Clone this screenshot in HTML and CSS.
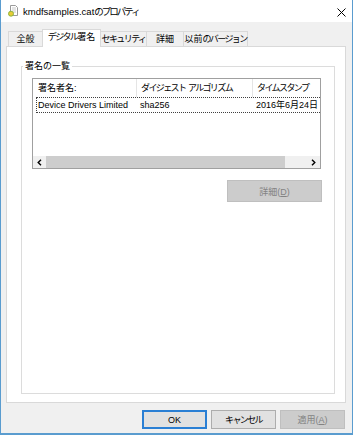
FILE: index.html
```html
<!DOCTYPE html>
<html lang="ja">
<head>
    <meta charset="UTF-8">
    <meta name="viewport" content="width=device-width, initial-scale=1.0">
    <title>kmdfsamples.catのプロパティ</title>
    <link rel="stylesheet" href="styles.css">
</head>
<body>
    <div class="window">
        <div class="title-bar">
            <svg class="file-icon" viewBox="0 0 10 12">
                <path d="M2.5 0.5h5l2 2v8h-7z" fill="#fff" stroke="#9a9a9a"/>
                <path d="M4 3h4M4 5h4M5 7h3" stroke="#c9c9c9"/>
                <circle cx="3" cy="8.7" r="2.5" fill="#e9cb36" stroke="#8db43c"/>
            </svg>
            <span class="title">kmdfsamples.cat<span class="kana title-kana">のプロパティ</span></span>
            <svg class="close-icon" viewBox="0 0 9 9">
                <path d="M0.5 0.5l8 8M8.5 0.5l-8 8" stroke="#000" stroke-width="1"/>
            </svg>
        </div>
        <div class="client">
            <div class="tabs">
                <div class="tab tab-general">全般</div>
                <div class="tab tab-active tab-sign"><span class="kana">デジタル</span>署名</div>
                <div class="tab tab-security"><span class="kana">セキュリティ</span></div>
                <div class="tab tab-detail">詳細</div>
                <div class="tab tab-version">以前<span class="kana">のバージョン</span></div>
            </div>
            <div class="tab-page">
                <fieldset class="sig-group">
                    <legend>署名の一覧</legend>
                    <div class="group-body">
                        <div class="sig-list">
                            <div class="list-head">
                                <div class="head-cell head-name">署名者名:</div>
                                <div class="head-cell head-digest"><span class="kana">ダイジェスト</span> <span class="kana">アルゴリズム</span></div>
                                <div class="head-cell head-stamp"><span class="kana">タイムスタンプ</span></div>
                            </div>
                            <div class="list-row">
                                <div class="row-cell row-name">Device Drivers Limited</div>
                                <div class="row-cell row-digest">sha256</div>
                                <div class="row-cell row-stamp">2016年6月24日 4:22:58</div>
                            </div>
                            <div class="list-space"></div>
                            <div class="hscroll">
                                <div class="scroll-btn">
                                    <svg viewBox="0 0 5 7"><path d="M4 0.8L1.2 3.5L4 6.2" fill="none" stroke="#000" stroke-width="1.4"/></svg>
                                </div>
                                <div class="scroll-thumb"></div>
                                <div class="scroll-track"></div>
                                <div class="scroll-btn">
                                    <svg viewBox="0 0 5 7"><path d="M1 0.8L3.8 3.5L1 6.2" fill="none" stroke="#000" stroke-width="1.4"/></svg>
                                </div>
                            </div>
                        </div>
                        <button class="btn btn-disabled btn-details" disabled>詳細(<u>D</u>)</button>
                    </div>
                </fieldset>
            </div>
            <div class="dialog-buttons">
                <button class="btn btn-dialog btn-default">OK</button>
                <button class="btn btn-dialog"><span class="kana">キャンセル</span></button>
                <button class="btn btn-dialog btn-disabled" disabled>適用(<u>A</u>)</button>
            </div>
        </div>
    </div>
</body>
</html>
```

FILE: styles.css
```css
:root {
    --face-color: #f0f0f0;
    --frame-color: #d9d9d9;
    --window-border: #5a9ccf;
    --disabled-bg: #cccccc;
    --disabled-border: #bfbfbf;
    --disabled-text: #838383;
}
*{
    box-sizing: border-box;
}
body{
    margin: 0;
    font-family: "Liberation Sans", "Noto Sans CJK JP", sans-serif;
    font-size: 9px;
    color: #000;
}
/* カナは幅を詰める */
.kana{
    letter-spacing: -1.6px;
}
.window{
    display: flex;
    flex-direction: column;
    width: 353px;
    height: 435px;
    border: 1px solid var(--window-border);
    border-top: none;
    border-bottom-width: 2px;
    background: var(--face-color);
}
/* タイトルバー */
.title-bar{
    display: flex;
    align-items: center;
    height: 22px;
    padding: 0 6px 0 7px;
    background: #fff;
}
.file-icon{
    width: 10px;
    height: 12px;
    margin-right: 5px;
}
.title{
    flex: 1;
    font-size: 9.5px;
}
.title-kana{
    letter-spacing: -2px;
}
.close-icon{
    width: 9px;
    height: 9px;
    margin-top: 2px;
}
.client{
    flex: 1;
    display: flex;
    flex-direction: column;
    padding: 7px 6px 4px 5px;
}
/* タブ */
.tabs{
    display: flex;
    align-items: flex-end;
    height: 17px;
    padding-left: 2px;
}
.tab{
    height: 15px;
    margin-right: -1px;
    border: 1px solid var(--frame-color);
    border-bottom: none;
    line-height: 14px;
    text-align: center;
    white-space: nowrap;
}
.tab-active{
    position: relative;
    z-index: 1;
    height: 18px;
    margin-bottom: -1px;
    background: #fff;
}
.tab-general{ width: 35px; }
.tab-sign{ width: 59px; }
.tab-security{ width: 47px; }
.tab-detail{ width: 38px; }
.tab-version{ width: 65px; }
.tab-page{
    display: flex;
    flex-direction: column;
    height: 357px;
    padding: 13px 10px 8px 14px;
    border: 1px solid var(--frame-color);
    background: #fff;
}
/* 署名の一覧 */
.sig-group{
    flex: 1;
    min-width: 0;
    margin: 0;
    padding: 0;
    border: 1px solid #dcdcdc;
}
.sig-group legend{
    margin-left: 1px;
    padding: 0 2px;
    line-height: 12px;
}
.group-body{
    display: flex;
    flex-direction: column;
    padding: 6px 13px 0 10px;
}
.sig-list{
    display: flex;
    flex-direction: column;
    height: 91px;
    overflow: hidden;
    border: 1px solid #a0a0a0;
    background: #fff;
}
.list-head{
    display: flex;
    flex-shrink: 0;
    height: 18px;
}
.head-cell{
    padding-left: 4px;
    line-height: 18px;
    white-space: nowrap;
    border-right: 1px solid #e5e5e5;
}
.head-name{
    width: 104px;
    padding-left: 5px;
}
.head-digest{
    width: 116px;
}
.head-stamp{
    flex: 1;
    border-right: none;
}
.list-row{
    display: flex;
    flex-shrink: 0;
    width: 400px;
    height: 16px;
    margin-left: 3px;
    border: 1px dotted #404040;
    line-height: 14px;
    white-space: nowrap;
}
.row-cell{
    padding-left: 4px;
}
.row-name{
    width: 99px;
    padding-left: 1px;
}
.row-digest{
    width: 116px;
}
.list-space{
    flex: 1;
}
.hscroll{
    display: flex;
    flex-shrink: 0;
    height: 12px;
    background: var(--face-color);
}
.scroll-btn{
    display: flex;
    align-items: center;
    justify-content: center;
    width: 13px;
}
.scroll-btn svg{
    width: 5px;
    height: 7px;
}
.scroll-thumb{
    width: 239px;
    background: #cdcdcd;
}
.scroll-track{
    flex: 1;
}
/* ボタン */
.btn{
    height: 19px;
    padding: 0;
    font: inherit;
    color: #000;
    background: #e1e1e1;
    border: 1px solid #adadad;
}
.btn-disabled{
    color: var(--disabled-text);
    background: var(--disabled-bg);
    border-color: var(--disabled-border);
}
.btn-details{
    align-self: flex-end;
    width: 95px;
    height: 22px;
    margin: 11px -1px 0 0;
}
.dialog-buttons{
    display: flex;
    justify-content: flex-end;
    gap: 4px;
    margin-top: 7px;
    padding-right: 1px;
}
.btn-dialog{
    width: 65px;
}
.btn-default{
    border: 2px solid #2a7fd4;
}
```
